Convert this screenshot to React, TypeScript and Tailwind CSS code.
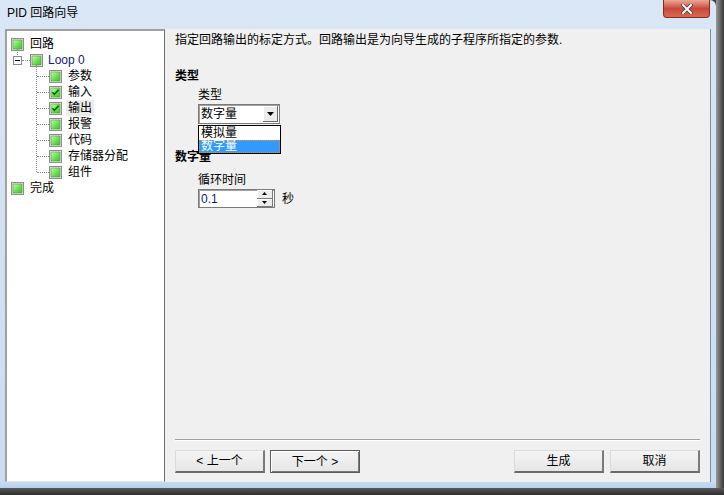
import { ReactNode } from "react";

const font = { fontFamily: '"Liberation Sans", "Noto Sans CJK SC", sans-serif' };

// green tree-state box, optionally ticked
function StateBox({ checked = false }: { checked?: boolean }) {
  return (
    <svg width="13" height="13" viewBox="0 0 13 13" className="shrink-0">
      <defs>
        <linearGradient id="gb" x1="0" y1="0" x2="1" y2="1">
          <stop offset="0" stopColor="#d2f8b8" />
          <stop offset="0.55" stopColor="#6cdc52" />
          <stop offset="1" stopColor="#44c234" />
        </linearGradient>
      </defs>
      <rect x="0.5" y="0.5" width="12" height="12" fill="#ececec" stroke="#8c8c8c" />
      <rect x="2" y="2" width="9" height="9" fill="url(#gb)" stroke="#3d9a2e" strokeWidth="0.6" />
      {checked && <path d="M3.4 6.2 L5.4 8.4 L9.6 3.8" fill="none" stroke="#135f10" strokeWidth="1.6" />}
    </svg>
  );
}

function ChildRow({ label, checked, selected }: { label: string; checked?: boolean; selected?: boolean }) {
  return (
    <div className="relative flex h-4 items-center">
      <div className="ml-[30px] w-[12px] border-t border-dotted border-[#8a8a8a]" />
      <StateBox checked={checked} />
      <span className={`ml-[4px] px-[2px] leading-4 ${selected ? "bg-[#ececec]" : ""}`}>{label}</span>
    </div>
  );
}

function WinButton({ children, isDefault }: { children: ReactNode; isDefault?: boolean }) {
  return (
    <button
      className={`flex h-[23px] w-[90px] items-center justify-center bg-gradient-to-b from-[#f4f4f4] to-[#e6e6e6] text-[12px] text-black ${
        isDefault
          ? "border border-[#5a5a5a] shadow-[inset_1px_1px_0_#ffffff,inset_-1px_-1px_0_#7a7a7a]"
          : "border-t border-l border-[#dcdcdc] border-r-2 border-b-2 border-r-[#7a7a7a] border-b-[#6a6a6a]"
      }`}
    >
      {children}
    </button>
  );
}

export default function App() {
  return (
    <div className="flex h-[495px] w-[724px] flex-col overflow-hidden bg-[#3e3e3e] text-[12px] text-black" style={font}>
      <div className="flex h-[488px]">
        {/* window */}
        <div className="flex w-[716px] flex-col rounded-tr-[6px] bg-gradient-to-b from-[#d9e7f6] to-[#c9dcf2]">
          {/* title bar */}
          <div className="flex h-[29px] items-start">
            <div className="ml-[7px] mt-[5px] text-[12px] leading-4 text-black">PID 回路向导</div>
            <div className="ml-auto mr-[6px] flex h-[18px] w-[47px] items-center justify-center rounded-b-[4px] border border-t-0 border-[#8a2a1c] bg-gradient-to-b from-[#e8a898] via-[#c9483a] to-[#d86a52]">
              <svg width="12" height="10" viewBox="0 0 12 10">
                <path d="M2 1 L10 9 M10 1 L2 9" stroke="#3a3a3a" strokeWidth="3.4" strokeLinecap="square" />
                <path d="M2 1 L10 9 M10 1 L2 9" stroke="#ffffff" strokeWidth="2" strokeLinecap="square" />
              </svg>
            </div>
          </div>

          {/* client area */}
          <div className="mx-[5px] flex h-[453px] border-r border-[#7a8ea6] bg-[#f0f0f0]">
            {/* tree */}
            <div className="w-[160px] border-t-2 border-l-2 border-r border-b border-t-[#a0a0a0] border-l-[#a0a0a0] border-r-[#6e6e6e] border-b-[#e6e6e6] bg-white pt-[5px]">
              <div className="flex h-4 items-center pl-[4px]">
                <StateBox />
                <span className="ml-[6px]">回路</span>
              </div>
              <div className="relative flex h-4 items-center">
                <div className="absolute left-[10px] top-[-3px] h-[6px] border-l border-dotted border-[#8a8a8a]" />
                <div className="ml-[6px] flex h-[9px] w-[9px] items-center justify-center border border-[#8a8a8a] bg-white">
                  <div className="w-[5px] border-t border-black" />
                </div>
                <div className="w-[8px] border-t border-dotted border-[#8a8a8a]" />
                <StateBox />
                <span className="ml-[5px] text-[#10207a]">Loop 0</span>
              </div>
              <div className="relative">
                <div className="absolute left-[29px] top-[-4px] h-[108px] border-l border-dotted border-[#8a8a8a]" />
                <ChildRow label="参数" />
                <ChildRow label="输入" checked />
                <ChildRow label="输出" checked selected />
                <ChildRow label="报警" />
                <ChildRow label="代码" />
                <ChildRow label="存储器分配" />
                <ChildRow label="组件" />
              </div>
              <div className="flex h-4 items-center pl-[4px]">
                <StateBox />
                <span className="ml-[6px]">完成</span>
              </div>
            </div>

            {/* page */}
            <div className="flex flex-1 flex-col pl-[10px] pr-[10px]">
              <div className="mt-[3px] leading-4">指定回路输出的标定方式。回路输出是为向导生成的子程序所指定的参数.</div>

              <div className="mt-[20px] font-bold leading-4">类型</div>
              <div className="ml-[23px] mt-[3px] leading-4">类型</div>
              <div className="relative ml-[23px] mt-[1px] w-[82px]">
                <div className="flex h-[20px] items-center border border-[#7a7a7a] bg-white pl-[2px] shadow-[inset_1px_1px_0_#a0a0a0]">
                  <span className="flex-1 leading-4">数字量</span>
                  <div className="mr-[1px] flex h-[16px] w-[15px] items-center justify-center border-r border-b border-[#6a6a6a] bg-[#ececec] shadow-[inset_1px_1px_0_#ffffff]">
                    <svg width="7" height="4" viewBox="0 0 7 4">
                      <path d="M0 0 H7 L3.5 4 Z" fill="#000" />
                    </svg>
                  </div>
                </div>
                <div className="absolute left-0 top-[21px] z-10 w-[83px] border border-black bg-white">
                  <div className="h-[14px] pl-[2px] leading-[14px]">模拟量</div>
                  <div className="h-[13px] border border-dotted border-[#e0902a] bg-[#3399ff] pl-[1px] leading-[11px] text-white">数字量</div>
                </div>
              </div>

              <div className="mt-[25px] font-bold leading-4">数字量</div>
              <div className="ml-[23px] mt-[7px] leading-4">循环时间</div>
              <div className="ml-[23px] mt-[1px] flex items-center">
                <div className="flex h-[19px] w-[77px] items-center border border-[#7a7a7a] bg-white shadow-[inset_1px_1px_0_#a0a0a0]">
                  <span className="flex-1 pl-[2px] leading-4 text-[#0a1a80]">0.1</span>
                  <div className="mr-[1px] flex h-[17px] w-[16px] flex-col">
                    <div className="flex flex-1 items-center justify-center border-r border-b border-[#7a7a7a] bg-[#ececec] shadow-[inset_1px_1px_0_#ffffff]">
                      <svg width="5" height="3" viewBox="0 0 5 3"><path d="M0 3 H5 L2.5 0 Z" fill="#000" /></svg>
                    </div>
                    <div className="flex flex-1 items-center justify-center border-r border-b border-[#7a7a7a] bg-[#ececec] shadow-[inset_1px_1px_0_#ffffff]">
                      <svg width="5" height="3" viewBox="0 0 5 3"><path d="M0 0 H5 L2.5 3 Z" fill="#000" /></svg>
                    </div>
                  </div>
                </div>
                <span className="ml-[7px] leading-4">秒</span>
              </div>

              <div className="mt-auto border-t border-[#a0a0a0] shadow-[0_1px_0_#ffffff]" />
              <div className="mb-[9px] mt-[10px] flex items-center">
                <WinButton>&lt; 上一个</WinButton>
                <div className="ml-[5px]">
                  <WinButton isDefault>下一个 &gt;</WinButton>
                </div>
                <div className="ml-auto">
                  <WinButton>生成</WinButton>
                </div>
                <div className="ml-[6px]">
                  <WinButton>取消</WinButton>
                </div>
              </div>
            </div>
          </div>
          <div className="flex-1 bg-gradient-to-b from-[#c6dbf2] to-[#b8d2ee]" />
        </div>
        {/* screen edge shadow */}
        <div className="flex-1 bg-gradient-to-r from-[#9a9a9a] to-[#3a3a3a]" />
      </div>
      <div className="flex-1 bg-gradient-to-b from-[#5a5a5a] to-[#2e2e2e]" />
    </div>
  );
}
